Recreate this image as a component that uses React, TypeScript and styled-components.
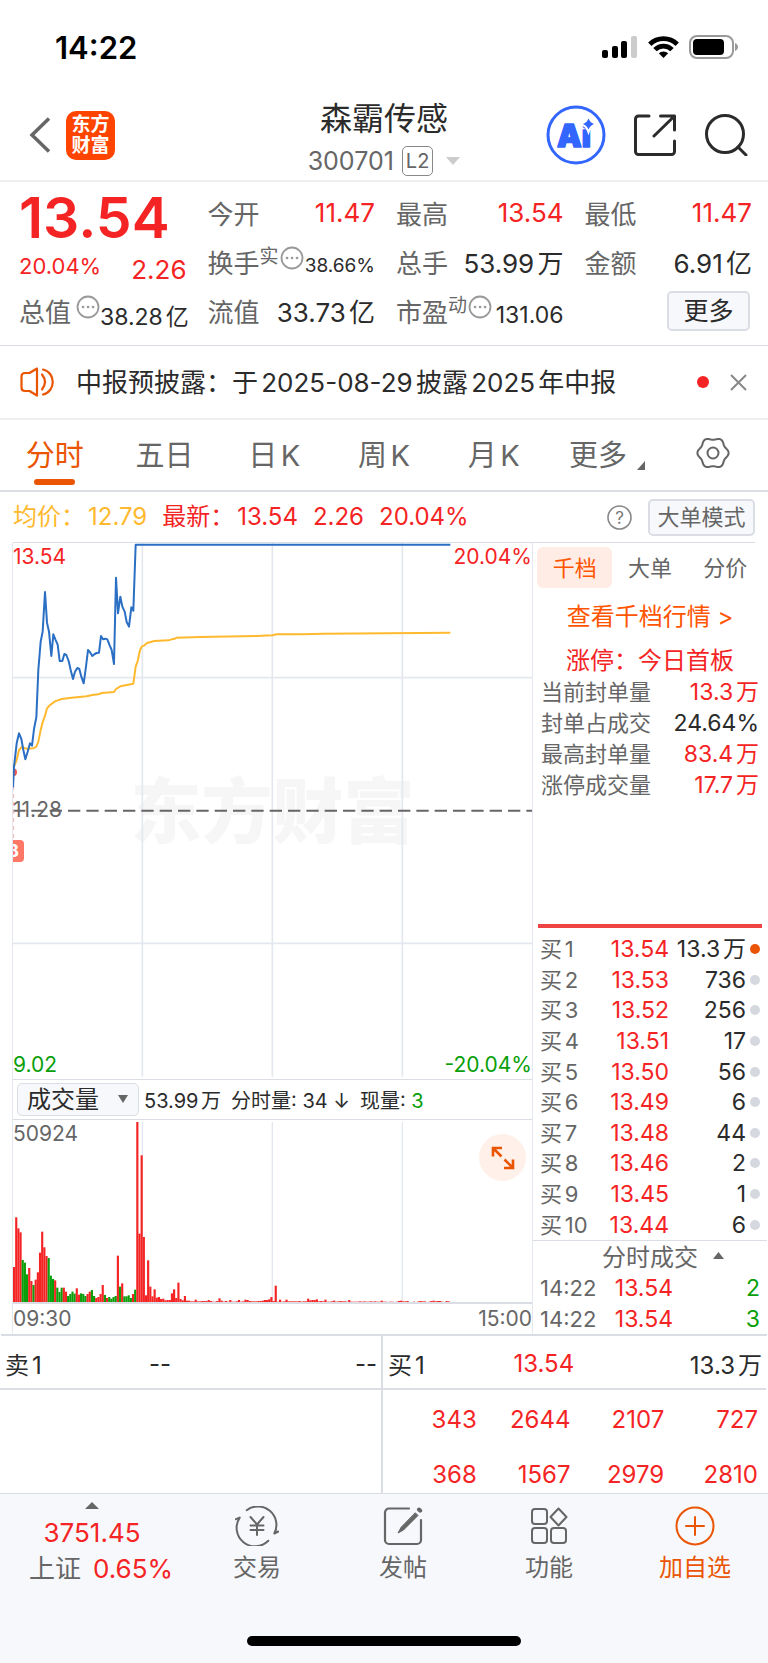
import React from "react";
import styled, { createGlobalStyle, css } from "styled-components";

const c = {
  red: "#f52424",
  green: "#0a9f0a",
  orange: "#ea5504",
  yellow: "#ffb92e",
  ink: "#2b2b2b",
  grey: "#666666",
  line: "#dadde3",
  grid: "#e3e7ee",
  panel: "#f7f8fb",
};

type Tone = "red" | "green" | "ink" | "grey" | "yellow" | "orange";

const GlobalStyle = createGlobalStyle`
  * { box-sizing: border-box; }
  body {
    margin: 0;
    background: #fff;
    color: ${c.ink};
    font-family: Inter, "Noto Sans CJK SC", sans-serif;
    text-autospace: normal;
  }
  button, select { font-family: inherit; color: inherit; text-autospace: inherit; }
  button { border: 0; padding: 0; background: none; cursor: pointer; }
  svg { display: block; }
  dl, dd, h1, p { margin: 0; }
`;

const Page = styled.div`
  display: flex;
  flex-direction: column;
  min-height: 100vh;
  overflow: hidden;
`;

/* ---------- status bar and header ---------- */

const StatusBar = styled.div`
  display: flex;
  align-items: center;
  justify-content: space-between;
  height: 90px;
  padding: 4px 29px 0 55px;
  color: #000;
  font-size: 31px;
  font-weight: 600;
`;

const StatusIcons = styled.div`
  display: flex;
  align-items: center;
  gap: 10px;
`;

const Header = styled.header`
  display: grid;
  grid-template-columns: 1fr auto 1fr;
  align-items: center;
  height: 92px;
  padding: 0 20px;
  border-bottom: 2px solid #eeeeee;
`;

const HeaderSide = styled.div<{ $end?: boolean }>`
  display: flex;
  align-items: center;
  gap: ${(p) => (p.$end ? "28px" : "14px")};
  justify-content: ${(p) => (p.$end ? "flex-end" : "flex-start")};
  padding-left: 8px;
`;

const Brand = styled.a`
  display: grid;
  place-content: center;
  width: 49px;
  height: 49px;
  border-radius: 10px;
  background: #ff4400;
  color: #fff;
  font-size: 19px;
  line-height: 21px;
  font-weight: 700;
  text-align: center;
  text-decoration: none;
`;

const TitleBlock = styled.div`
  display: flex;
  flex-direction: column;
  align-items: center;
  padding-top: 6px;
`;

const StockName = styled.h1`
  font-size: 32px;
  line-height: 46px;
  font-weight: 400;
`;

const CodeRow = styled.div`
  display: flex;
  align-items: center;
  gap: 8px;
  height: 38px;
  color: ${c.grey};
  font-size: 25px;
`;

const LevelTag = styled.span`
  height: 30px;
  padding: 0 3px;
  border: 1px solid #888;
  border-radius: 5px;
  font-size: 20px;
  line-height: 28px;
`;

const CodeArrow = styled.span`
  margin-left: 5px;
`;

/* ---------- quote summary ---------- */

const Quote = styled.dl`
  display: grid;
  grid-template-columns: repeat(4, minmax(0, 1fr));
  grid-auto-rows: 49px;
  column-gap: 21px;
  padding: 6px 16px 10px 19px;
  border-bottom: 1px solid ${c.line};
`;

const Cell = styled.div`
  display: flex;
  align-items: center;
  justify-content: space-between;
  white-space: nowrap;
`;

const BigPrice = styled.dd`
  padding-top: 10px;
  color: ${c.red};
  font-size: 57px;
  line-height: 56px;
  font-weight: 600;
`;

const Label = styled.dt`
  display: flex;
  align-items: center;
  color: ${c.grey};
  font-size: 26px;
`;

const Sup = styled.span`
  margin-bottom: 14px;
  font-size: 19px;
`;

const More = styled.button<{ $spaced?: boolean }>`
  margin: 0 0 7px ${(p) => (p.$spaced ? 5 : 1)}px;
`;

const valueSize = { s: 19, p: 22, m: 23, l: 26 };

const Value = styled.dd<{ $tone?: Tone; $size?: keyof typeof valueSize; $low?: boolean }>`
  padding-top: ${(p) => (p.$low ? 15 : p.$size ? 8 : 0)}px;
  color: ${(p) => c[p.$tone ?? "ink"]};
  font-size: ${(p) => valueSize[p.$size ?? "l"]}px;
`;

const OutlineButton = styled.button<{ $wide?: boolean }>`
  border: 2px solid ${c.line};
  border-radius: 5px;
  background: ${c.panel};
  ${(p) =>
    p.$wide
      ? css`
          width: 107px;
          height: 37px;
          font-size: 22px;
          line-height: 31px;
          color: ${c.grey};
        `
      : css`
          width: 83px;
          height: 40px;
          margin: 0 2px 0 auto;
          font-size: 25px;
          line-height: 34px;
        `}
`;

/* ---------- notice ---------- */

const Notice = styled.section`
  display: flex;
  align-items: center;
  height: 74px;
  padding: 0 21px 0 20px;
  border-bottom: 2px solid #eeeeee;
`;

const NoticeText = styled.p`
  flex: 1;
  margin-left: 21px;
  padding-bottom: 4px;
  font-size: 26px;
  white-space: nowrap;
`;

const Dot = styled.span<{ $size: number; $color: string }>`
  display: block;
  width: ${(p) => p.$size}px;
  height: ${(p) => p.$size}px;
  border-radius: 50%;
  background: ${(p) => p.$color};
`;

const CloseButton = styled.button`
  margin-left: 21px;
`;

/* ---------- period tabs ---------- */

const Tabs = styled.nav`
  display: grid;
  grid-template-columns: repeat(7, 1fr);
  height: 72px;
  border-bottom: 2px solid ${c.line};
`;

const Tab = styled.button<{ $active?: boolean }>`
  position: relative;
  display: flex;
  align-items: center;
  justify-content: center;
  gap: 10px;
  padding-bottom: 4px;
  color: ${(p) => (p.$active ? c.orange : c.grey)};
  font-size: 29px;
  white-space: nowrap;
  ${(p) =>
    p.$active &&
    css`
      &::after {
        content: "";
        position: absolute;
        bottom: 5px;
        width: 41px;
        height: 6px;
        border-radius: 3px;
        background: ${c.orange};
      }
    `}
`;

const CornerMark = styled.svg`
  margin: 24px -7px 0 0;
`;

/* ---------- price line above the chart ---------- */

const InfoRow = styled.div`
  display: flex;
  align-items: center;
  height: 51px;
  margin: 0 13px;
  border-bottom: 1px solid ${c.line};
  font-size: 24px;
  line-height: 30px;
  white-space: nowrap;
`;

const InfoText = styled.span<{ $tone: Tone }>`
  display: flex;
  align-items: baseline;
  gap: 3px;
  margin-right: 15px;
  color: ${(p) => c[p.$tone]};
`;

const HelpButton = styled.button`
  margin: 0 16px 0 auto;
`;

/* ---------- main area ---------- */

const Main = styled.main`
  display: grid;
  grid-template-columns: minmax(0, 1fr) 234px;
  margin: 0 1px;
  border-bottom: 2px solid ${c.line};
`;

const Charts = styled.div`
  margin-left: 11px;
  border-left: 1px solid ${c.grid};
  border-right: 1px solid ${c.grid};
`;

const Plot = styled.div<{ $height: number }>`
  position: relative;
  height: ${(p) => p.$height}px;
  overflow: hidden;
  > svg {
    position: relative;
    width: 100%;
    height: 100%;
  }
`;

const Watermark = styled.span`
  position: absolute;
  inset: 0;
  display: grid;
  place-content: center;
  color: #f6f6f7;
  font-size: 71px;
  line-height: 70px;
  font-weight: 900;
`;

const AxisLabel = styled.span<{ $tone: Tone; $at: "tl" | "tr" | "bl" | "br" | "ml" }>`
  position: absolute;
  color: ${(p) => c[p.$tone]};
  font-size: 21px;
  line-height: 24px;
  ${(p) => (p.$at[0] === "t" ? "top: 2px;" : p.$at[0] === "b" ? "bottom: 2px;" : "top: calc(50% - 13px);")}
  ${(p) => (p.$at[1] === "l" ? "left: 0;" : "right: 0;")}
`;

const BuyMark = styled.span`
  position: absolute;
  top: 297px;
  left: -11px;
  width: 22px;
  height: 22px;
  border-radius: 4px;
  background: #ff7766;
  color: #fff;
  font-size: 18px;
  line-height: 22px;
  font-weight: 700;
  text-align: center;
`;

const VolumeBar = styled.div`
  display: flex;
  align-items: center;
  gap: 5px;
  height: 41px;
  padding-left: 4px;
  border: solid ${c.line};
  border-width: 1px 0;
  font-size: 20px;
  white-space: nowrap;
`;

const VolumeFigures = styled.div`
  display: flex;
  gap: 10px;
`;

const SelectBox = styled.span`
  position: relative;
  > svg {
    position: absolute;
    top: 12px;
    right: 11px;
    pointer-events: none;
  }
`;

const Select = styled.select`
  display: block;
  width: 122px;
  height: 33px;
  padding: 0 0 0 9px;
  border: 1px solid ${c.line};
  border-radius: 5px;
  background: ${c.panel};
  appearance: none;
  font-size: 24px;
  line-height: 30px;
`;

const Tinted = styled.span<{ $tone: Tone }>`
  color: ${(p) => c[p.$tone]};
`;

const ExpandButton = styled.button`
  position: absolute;
  top: 14px;
  right: 6px;
  display: grid;
  place-content: center;
  width: 47px;
  height: 47px;
  border-radius: 50%;
  background: #fff0ea;
`;

const TimeAxis = styled.div`
  display: flex;
  justify-content: space-between;
  height: 32px;
  border-top: 2px solid ${c.line};
  color: ${c.grey};
  font-size: 21px;
  line-height: 30px;
`;

/* ---------- side panel ---------- */

const Side = styled.aside`
  display: flex;
  flex-direction: column;
  color: ${c.grey};
`;

const SideTabs = styled.div`
  display: grid;
  grid-template-columns: repeat(3, 1fr);
  padding: 4px 4px 0;
`;

const SideTab = styled.button<{ $active?: boolean }>`
  height: 41px;
  padding-bottom: 4px;
  border-radius: 6px;
  font-size: 22px;
  ${(p) =>
    p.$active &&
    css`
      background: #ffece4;
      color: #ff5500;
    `}
`;

const DepthLink = styled.a`
  color: #ff5500;
  font-size: 24px;
  line-height: 57px;
  text-align: center;
  text-decoration: none;
`;

const LimitTitle = styled.p`
  color: ${c.red};
  font-size: 24px;
  line-height: 32px;
  text-align: center;
`;

const DataTable = styled.table<{ $height: number; $inset?: number }>`
  height: ${(p) => p.$height}px;
  margin: 0 ${(p) => p.$inset ?? 7}px;
  border-spacing: 0;
  table-layout: fixed;
  font-size: 22px;
  line-height: 24px;
  white-space: nowrap;
  td {
    font-size: 23px;
  }
`;

const HeadCell = styled.th<{ $width?: number }>`
  width: ${(p) => (p.$width ? p.$width + "px" : "auto")};
  padding: 0;
  font-weight: 400;
  text-align: left;
`;

const NumCell = styled.td<{ $tone: Tone; $width?: number }>`
  width: ${(p) => (p.$width ? p.$width + "px" : "auto")};
  padding: 0;
  color: ${(p) => c[p.$tone]};
  text-align: right;
`;

const DotCell = styled.td`
  width: 14px;
  padding: 0 0 0 4px;
`;

const Book = styled.div`
  display: flex;
  flex-direction: column;
  margin-top: auto;
  border-bottom: 1px solid ${c.line};
`;

const RatioBar = styled.div`
  height: 4px;
  margin: 0 5px 6px;
  background: #ee4444;
`;

const TradesToggle = styled.button`
  display: flex;
  align-items: center;
  justify-content: center;
  gap: 15px;
  height: 32px;
  padding: 0 0 4px 26px;
  font-size: 24px;
`;

/* ---------- best bid and offer ---------- */

const Level = styled.div`
  display: grid;
  grid-template-columns: 1fr 1fr;
  margin-right: 2px;
  border-bottom: 2px solid ${c.line};
`;

const LevelSide = styled.div<{ $buy?: boolean }>`
  display: grid;
  grid-template-columns: 7fr 6fr 11fr;
  align-items: center;
  height: 52px;
  padding: 2px 4px 0 5px;
  border-right: ${(p) => (p.$buy ? "0" : `2px solid ${c.line}`)};
  font-size: 24px;
  > :nth-child(2) {
    text-align: center;
  }
  > :nth-child(3) {
    text-align: right;
  }
`;

const Queues = styled.div`
  display: grid;
  grid-template-columns: 1fr 1fr;
  height: 103px;
  margin-right: 2px;
  overflow: hidden;
`;

const QueueSide = styled.div<{ $buy?: boolean }>`
  padding: 2px 8px 0 0;
  border-right: ${(p) => (p.$buy ? "0" : `2px solid ${c.line}`)};
`;

const QueueTable = styled.table`
  width: 100%;
  border-spacing: 0;
  table-layout: fixed;
  font-size: 24px;
  line-height: 55px;
`;

/* ---------- bottom bar ---------- */

const Footer = styled.footer`
  display: flex;
  flex: 1;
  flex-direction: column;
  justify-content: space-between;
  border-top: 1px solid ${c.line};
  background: ${c.panel};
`;

const FooterNav = styled.nav`
  display: grid;
  grid-template-columns: 184px repeat(4, 1fr);
`;

const IndexButton = styled.button`
  display: flex;
  flex-direction: column;
  align-items: center;
  padding-top: 8px;
  color: ${c.red};
  font-size: 26px;
  line-height: 36px;
  white-space: nowrap;
  > svg {
    margin-bottom: 6px;
  }
`;

const IndexChange = styled.span`
  display: flex;
  gap: 12px;
  padding-left: 18px;
`;

const Action = styled.button<{ $accent?: boolean }>`
  display: flex;
  flex-direction: column;
  align-items: center;
  gap: 4px;
  padding-top: 12px;
  color: ${(p) => (p.$accent ? c.orange : c.grey)};
  font-size: 24px;
  line-height: 36px;
`;

const HomeBar = styled.div`
  width: 274px;
  height: 10px;
  margin: 40px auto 17px;
  border-radius: 5px;
  background: #000;
`;

/* ---------- data ---------- */

const PRICE = `39,772 42,710 50,640 57,610 64,627 70,660 76,688 83,665 90,640 96,647 102,597 109,562
115,420 122,335 128,305 135,186 141,278 147,305 154,378 160,313 166,328 173,344 179,393 187,393
193,372 199,375 206,393 212,420 219,447 225,425 232,414 238,417 244,440 251,460 258,410 264,360
271,368 277,378 284,372 290,369 297,368 303,318 309,328 316,326 322,328 329,346 335,360 342,402
348,143 354,250 361,200 367,230 374,245 380,276 387,290 394,232 400,242 407,44 1351,44`;

const AVERAGE = `42,710 50,690 57,660 64,652 80,656 100,655 109,650 115,635 122,600 128,577 135,557
141,535 150,525 165,514 185,507 215,503 260,499 277,495 295,493 305,489 342,486 348,477 361,469
400,461 407,410 413,393 420,360 426,349 432,347 441,339 463,333 505,331 515,328 525,326 530,323
600,321 770,318 817,316 830,313 910,313 970,311 1351,308`;

// One entry a minute from 09:30; a negative height is a falling minute.
const VOLUME = [
  105, 254, 221, 209, -126, -118, -83, 102, 63, -51, 67, 89, 148, 211, 164, 138, -132, -79, -69, 65,
  -43, -30, -43, 43, 31, -18, -24, -31, -25, 41, 22, -26, -24, -18, 24, 31, -36, -18, 12, 15, 24, 51,
  -21, 12, -15, -10, -15, -18, 139, -46, 56, -17, -17, -20, -12, 24, -37, 540, 205, 440, 195, 20, 125,
  46, 17, 38, 13, 15, 9, 10, 5, 6, 6, 26, 38, 12, 58, 9, 5, 18, 4, 4, 2, 2, 7, 2, 2, 3, 3, 3, 6, 3, 1,
  1, 3, 11, 4, 1, 3, 1, 6, 1, 1, 2, 6, 1, 2, 7, 6, 3, 2, 2, 2, 3, 3, 4, 6, 6, 8, 15, 3, 49, 1, 7, 1, 2,
  7, 2, 2, 2, 2, 2, 3, 1, 2, 2, 10, 5, 6, 6, 8, 2, 3, 2, 7, 1, 1, 2, 4, 1, 2, 3, 2, 2, 1, 6, 1, 1, 1,
  1, 2, 1, 2, 1, 1, 2, 1, 2, 1, 1, 4, 1, 1, 0, 1, 1, 0, 1, 3, 4, 2, 2, 3, 0, 0, 1, 0, 2, 3, 2, 2, 0,
  1, 3, 4, 2, 3, 3, 1, 0, 3, 2,
];

const BOOK: [string, string, string][] = [
  ["买1", "13.54", "13.3万"],
  ["买2", "13.53", "736"],
  ["买3", "13.52", "256"],
  ["买4", "13.51", "17"],
  ["买5", "13.50", "56"],
  ["买6", "13.49", "6"],
  ["买7", "13.48", "44"],
  ["买8", "13.46", "2"],
  ["买9", "13.45", "1"],
  ["买10", "13.44", "6"],
];

const LIMIT: [string, string, Tone][] = [
  ["当前封单量", "13.3万", "red"],
  ["封单占成交", "24.64%", "ink"],
  ["最高封单量", "83.4万", "red"],
  ["涨停成交量", "17.7万", "red"],
];

const TRADES: [string, string, string][] = [
  ["14:22", "13.54", "2"],
  ["14:22", "13.54", "3"],
];

const QUEUE = [
  ["343", "2644", "2107", "727"],
  ["368", "1567", "2979", "2810"],
];

/* ---------- icons ---------- */

const Triangle = ({ w, h, up, fill = c.grey }: { w: number; h: number; up?: boolean; fill?: string }) => (
  <svg width={w} height={h} viewBox="0 0 10 10" preserveAspectRatio="none" fill={fill}>
    <path d={up ? "M0 10 5 0 10 10Z" : "M0 0 5 10 10 0Z"} />
  </svg>
);

const Ellipsis = ({ spaced }: { spaced?: boolean }) => (
  <More aria-label="说明" $spaced={spaced}>
    <svg width="24" height="24" viewBox="0 0 24 24" fill="none" stroke="#999" strokeWidth="1.8">
      <circle cx="12" cy="12" r="10.5" />
      <path d="M7 12h.1M12 12h.1M17 12h.1" strokeWidth="2.6" strokeLinecap="round" />
    </svg>
  </More>
);

const Signal = () => (
  <svg width="36" height="22" viewBox="0 0 36 22">
    <rect x="0" y="14" width="6" height="8" rx="2" />
    <rect x="10" y="10" width="6" height="12" rx="2" />
    <rect x="19" y="5" width="6" height="17" rx="2" />
    <rect x="29" y="0" width="6" height="22" rx="2" fill="#ccc" />
  </svg>
);

const Wifi = () => (
  <svg width="31" height="22" viewBox="0 0 31 22" fill="none" stroke="#000" strokeWidth="4.8">
    <path d="M1.8 8.2a19.4 19.4 0 0 1 27.4 0" />
    <path d="M7 13.6a12 12 0 0 1 17 0" />
    <path d="M15.5 22 10.8 17.3a6.8 6.8 0 0 1 9.4 0Z" fill="#000" stroke="none" />
  </svg>
);

const Battery = () => (
  <svg width="50" height="24" viewBox="0 0 50 24">
    <rect x="1" y="1" width="43" height="22" rx="7" fill="none" stroke="#999" strokeWidth="2" />
    <rect x="4" y="4" width="31" height="16" rx="4" />
    <path d="M46 8c4 1.500 4 6.500 0 8Z" fill="#999" />
  </svg>
);

const AiLogo = () => (
  <svg width="60" height="60" viewBox="0 0 60 60">
    <circle cx="30" cy="30" r="28" fill="none" stroke="#3366ff" strokeWidth="3" />
    <text x="11" y="42" fill="#3366ff" stroke="#3366ff" strokeWidth="1.500" strokeLinejoin="round" fontFamily="Inter, sans-serif" fontSize="31" fontWeight="900">
      Ai
    </text>
    <path d="M42.500 13.500q1.500 4 5.500 5.500-4 1.500-5.500 5.500-1.500-4-5.500-5.500 4-1.500 5.500-5.500Z" fill="#3366ff" stroke="#fff" strokeWidth="4" paintOrder="stroke" />
  </svg>
);

const Share = () => (
  <svg width="42" height="42" viewBox="0 0 42 42" fill="none" stroke="#2b2b2b" strokeWidth="3" strokeLinecap="round" strokeLinejoin="round">
    <path d="M15 2H4.500a3 3 0 0 0-3 3v32.500a3 3 0 0 0 3 3h33a3 3 0 0 0 3-3V27" />
    <path d="M26.500 2h14v14M40.500 2 20 22" />
  </svg>
);

const Search = () => (
  <svg width="44" height="42" viewBox="0 0 44 42" fill="none" stroke="#2b2b2b" strokeWidth="3" strokeLinecap="round">
    <circle cx="21" cy="20" r="18.500" />
    <path d="m34 33 8 8" />
  </svg>
);

const GEAR_RIM = Array.from({ length: 90 }, (_, i) => {
  const a = (i * Math.PI) / 45;
  const r = 14.4 + 1.2 * Math.cos(6 * a);
  return `${(17 + r * Math.cos(a)).toFixed(2)},${(17 + r * Math.sin(a)).toFixed(2)}`;
}).join(" ");

const Gear = () => (
  <svg width="34" height="34" viewBox="0 0 34 34" fill="none" stroke={c.grey} strokeWidth="2" strokeLinejoin="round">
    <polygon points={GEAR_RIM} />
    <circle cx="17" cy="17" r="5.500" />
  </svg>
);

const Speaker = () => (
  <svg width="35" height="30" viewBox="0 0 35 30" fill="none" stroke={c.orange} strokeWidth="2.200" strokeLinecap="round" strokeLinejoin="round">
    <path d="M17 1.500 9.500 6H5Q1.500 6 1.500 9.500v11Q1.500 24 5 24h4.500l7.500 4.500Z" />
    <path d="M22 7.500q6 7.500 0 15M23 2.500c13 3 13 22 0 25" />
  </svg>
);

const Close = () => (
  <svg width="17" height="17" viewBox="0 0 17 17" fill="none" stroke="#888" strokeWidth="2">
    <path d="m1 1 15 15M16 1 1 16" />
  </svg>
);

const Help = () => (
  <svg width="25" height="25" viewBox="0 0 25 25">
    <circle cx="12.500" cy="12.500" r="11.500" fill="none" stroke="#888" strokeWidth="1.600" />
    <text x="12.500" y="18.500" textAnchor="middle" fontSize="17" fill="#777" fontFamily="Inter, sans-serif">
      ?
    </text>
  </svg>
);

const Expand = () => (
  <svg width="24" height="24" viewBox="0 0 24 24" fill="none" stroke={c.orange} strokeWidth="2.600">
    <path d="M2 10.500V2h9M2.500 2.500l8 8M22 13.500V22h-9M21.500 21.500l-8-8" />
  </svg>
);

const Trade = () => (
  <svg width="44" height="40" viewBox="0 0 44 40" fill="none" stroke={c.grey} strokeWidth="2" strokeLinecap="round" strokeLinejoin="round">
    <path d="M11.700 4.200A18.500 18.500 0 0 1 39.300 27.500l4-2" />
    <path d="M33.300 34.800A18.500 18.500 0 0 1 4.700 11.600L.9 13.200" />
    <path d="m15.500 11 6.500 7.500 6.500-7.500M22 18.500V29M15.500 19.500h13M15.500 24h13" />
  </svg>
);

const Post = () => (
  <svg width="40" height="40" viewBox="0 0 40 40" fill="none" stroke={c.grey} strokeWidth="2.200" strokeLinecap="round">
    <path d="M26 2.500H6a4 4 0 0 0-4 4V34a4 4 0 0 0 4 4h28a4 4 0 0 0 4-4V14" />
    <path d="M32.500 7 35 9.500 20.500 24 15 27l3-5.500Z" fill={c.grey} strokeWidth="1" />
    <path d="m36 3.500 1.200 1.200" strokeWidth="4" />
  </svg>
);

const Functions = () => (
  <svg width="38" height="40" viewBox="0 0 38 40" fill="none" stroke={c.grey} strokeWidth="2" strokeLinejoin="round">
    <rect x="2" y="3" width="15" height="15" rx="3" />
    <rect x="2" y="22" width="15" height="15" rx="3" />
    <rect x="21" y="22" width="15" height="15" rx="3" />
    <path d="m28.500 2.500 8 8.500-8 8.500-8-8.500Z" />
  </svg>
);

const AddCircle = () => (
  <svg width="40" height="40" viewBox="0 0 40 40" fill="none" stroke={c.orange} strokeWidth="2" strokeLinecap="round">
    <circle cx="20" cy="20" r="18.500" />
    <path d="M20 11v18M11 20h18" />
  </svg>
);

/* ---------- charts ---------- */

const GRID_X = [427, 817, 1207];

const PriceChart = () => (
  <Plot $height={536}>
    <Watermark>东方财富</Watermark>
    <svg viewBox="39 39 1557 1608" preserveAspectRatio="none" fill="none">
      <g stroke={c.grid} strokeWidth="5">
        {GRID_X.map((x) => (
          <path key={x} d={`M${x} 39V1640`} />
        ))}
        <path d="M39 443H1596M39 1240H1596" />
      </g>
      <path d="M39 842H1596" stroke="#666" strokeWidth="6" strokeDasharray="37 18" />
      <path d="M41 720V930" stroke="#f7b6b6" strokeWidth="3" strokeDasharray="12 12" />
      <circle cx="39" cy="727" r="12" fill="#f05a50" />
      <polyline points={AVERAGE} stroke={c.yellow} strokeWidth="6" strokeLinejoin="round" />
      <polyline points={PRICE} stroke="#2a6fc4" strokeWidth="6" strokeLinejoin="round" />
    </svg>
    <AxisLabel $tone="red" $at="tl">13.54</AxisLabel>
    <AxisLabel $tone="red" $at="tr">20.04%</AxisLabel>
    <AxisLabel $tone="grey" $at="ml">11.28</AxisLabel>
    <AxisLabel $tone="green" $at="bl">9.02</AxisLabel>
    <AxisLabel $tone="green" $at="br">-20.04%</AxisLabel>
    <BuyMark>B</BuyMark>
  </Plot>
);

const VolumeChart = () => {
  const step = 1557 / 240;
  return (
    <Plot $height={182}>
      <svg viewBox="0 0 1557 546" preserveAspectRatio="none">
        <g stroke={c.grid} strokeWidth="4">
          {GRID_X.map((x) => (
            <path key={x} d={`M${x - 39} 6V546`} />
          ))}
        </g>
        {VOLUME.map((v, i) => (
          <rect key={i} x={i * step} y={546 - Math.abs(v)} width={step} height={Math.abs(v)} fill={v < 0 ? c.green : c.red} />
        ))}
      </svg>
      <AxisLabel $tone="grey" $at="tl">50924</AxisLabel>
      <ExpandButton aria-label="全屏">
        <Expand />
      </ExpandButton>
    </Plot>
  );
};

/* ---------- page ---------- */

type StatProps = { label: string; sup?: string; info?: boolean; value: string; tone?: Tone; size?: keyof typeof valueSize };

const Stat = ({ label, sup, info, value, tone, size }: StatProps) => (
  <Cell>
    <Label>
      {label}
      {sup && <Sup>{sup}</Sup>}
      {info && <Ellipsis spaced={!sup} />}
    </Label>
    <Value $tone={tone} $size={size}>{value}</Value>
  </Cell>
);

export default function App() {
  return (
    <Page>
      <GlobalStyle />
      <StatusBar>
        <span>14:22</span>
        <StatusIcons>
          <Signal />
          <Wifi />
          <Battery />
        </StatusIcons>
      </StatusBar>

      <Header>
        <HeaderSide>
          <button aria-label="返回">
            <svg width="24" height="36" viewBox="0 0 24 36" fill="none" stroke="#666" strokeWidth="3.500">
              <path d="M21 1.500 4 18l17 16.500" />
            </svg>
          </button>
          <Brand href="#">
            东方
            <br />
            财富
          </Brand>
        </HeaderSide>
        <TitleBlock>
          <StockName>森霸传感</StockName>
          <CodeRow>
            300701
            <LevelTag>L2</LevelTag>
            <CodeArrow>
              <Triangle w={14} h={8} fill="#ccc" />
            </CodeArrow>
          </CodeRow>
        </TitleBlock>
        <HeaderSide $end>
          <button aria-label="AI 助手"><AiLogo /></button>
          <button aria-label="分享"><Share /></button>
          <button aria-label="搜索"><Search /></button>
        </HeaderSide>
      </Header>

      <Quote>
        <Cell><BigPrice>13.54</BigPrice></Cell>
        <Stat label="今开" value="11.47" tone="red" />
        <Stat label="最高" value="13.54" tone="red" />
        <Stat label="最低" value="11.47" tone="red" />
        <Cell>
          <Value as="span" $tone="red" $size="p">20.04%</Value>
          <Value as="span" $tone="red" $low>2.26</Value>
        </Cell>
        <Stat label="换手" sup="实" info value="38.66%" size="s" />
        <Stat label="总手" value="53.99万" />
        <Stat label="金额" value="6.91亿" />
        <Stat label="总值" info value="38.28亿" size="m" />
        <Stat label="流值" value="33.73亿" />
        <Stat label="市盈" sup="动" info value="131.06" size="m" />
        <Cell><OutlineButton>更多</OutlineButton></Cell>
      </Quote>

      <Notice>
        <Speaker />
        <NoticeText>中报预披露：于2025-08-29披露2025年中报</NoticeText>
        <Dot $size={12} $color={c.red} />
        <CloseButton aria-label="关闭"><Close /></CloseButton>
      </Notice>

      <Tabs>
        <Tab $active>分时</Tab>
        <Tab>五日</Tab>
        <Tab>日K</Tab>
        <Tab>周K</Tab>
        <Tab>月K</Tab>
        <Tab>
          更多
          <CornerMark width="8" height="9" viewBox="0 0 8 9" fill={c.grey}>
            <path d="M8 0V9H0Z" />
          </CornerMark>
        </Tab>
        <Tab aria-label="设置"><Gear /></Tab>
      </Tabs>

      <InfoRow>
        <InfoText $tone="yellow"><span>均价：</span>12.79</InfoText>
        <InfoText $tone="red"><span>最新：</span>13.54</InfoText>
        <InfoText $tone="red">2.26</InfoText>
        <InfoText $tone="red">20.04%</InfoText>
        <HelpButton aria-label="帮助"><Help /></HelpButton>
        <OutlineButton $wide>大单模式</OutlineButton>
      </InfoRow>

      <Main>
        <Charts>
          <PriceChart />
          <VolumeBar>
            <SelectBox>
              <Select aria-label="指标" defaultValue="vol">
                <option value="vol">成交量</option>
              </Select>
              <Triangle w={10} h={8} />
            </SelectBox>
            <VolumeFigures>
              <span>53.99万</span>
              <span>分时量: 34 ↓</span>
              <span>现量: <Tinted $tone="green">3</Tinted></span>
            </VolumeFigures>
          </VolumeBar>
          <VolumeChart />
          <TimeAxis>
            <span>09:30</span>
            <span>15:00</span>
          </TimeAxis>
        </Charts>

        <Side>
          <SideTabs>
            <SideTab $active>千档</SideTab>
            <SideTab>大单</SideTab>
            <SideTab>分价</SideTab>
          </SideTabs>
          <DepthLink href="#">查看千档行情 &gt;</DepthLink>
          <LimitTitle>涨停：今日首板</LimitTitle>
          <DataTable $height={123} $inset={8}>
            <tbody>
              {LIMIT.map(([label, value, tone]) => (
                <tr key={label}>
                  <HeadCell scope="row" $width={120}>{label}</HeadCell>
                  <NumCell $tone={tone}>{value}</NumCell>
                </tr>
              ))}
            </tbody>
          </DataTable>
          <Book>
            <RatioBar />
            <DataTable $height={306}>
              <tbody>
                {BOOK.map(([label, price, qty], i) => (
                  <tr key={label}>
                    <HeadCell scope="row" $width={52}>{label}</HeadCell>
                    <NumCell $tone="red" $width={77}>{price}</NumCell>
                    <NumCell $tone="ink">{qty}</NumCell>
                    <DotCell><Dot $size={10} $color={i === 0 ? c.orange : "#d5d8df"} /></DotCell>
                  </tr>
                ))}
              </tbody>
            </DataTable>
          </Book>
          <TradesToggle>
            分时成交
            <Triangle w={11} h={7} up />
          </TradesToggle>
          <DataTable $height={61}>
            <tbody>
              {TRADES.map(([time, price, qty]) => (
                <tr key={qty}>
                  <HeadCell scope="row" $width={63}>{time}</HeadCell>
                  <NumCell $tone="red" $width={70}>{price}</NumCell>
                  <NumCell $tone="green">{qty}</NumCell>
                </tr>
              ))}
            </tbody>
          </DataTable>
        </Side>
      </Main>

      <Level>
        <LevelSide>
          <span>卖1</span>
          <span>--</span>
          <span>--</span>
        </LevelSide>
        <LevelSide $buy>
          <span>买1</span>
          <Tinted $tone="red">13.54</Tinted>
          <span>13.3万</span>
        </LevelSide>
      </Level>
      <Queues>
        <QueueSide />
        <QueueSide $buy>
          <QueueTable>
            <tbody>
              {QUEUE.map((row) => (
                <tr key={row[0]}>
                  {row.map((n) => (
                    <NumCell key={n} $tone="red">{n}</NumCell>
                  ))}
                </tr>
              ))}
            </tbody>
          </QueueTable>
        </QueueSide>
      </Queues>

      <Footer>
        <FooterNav>
          <IndexButton>
            <Triangle w={14} h={7} up />
            <span>3751.45</span>
            <IndexChange><Tinted $tone="grey">上证</Tinted>0.65%</IndexChange>
          </IndexButton>
          <Action><Trade />交易</Action>
          <Action><Post />发帖</Action>
          <Action><Functions />功能</Action>
          <Action $accent><AddCircle />加自选</Action>
        </FooterNav>
        <HomeBar />
      </Footer>
    </Page>
  );
}
